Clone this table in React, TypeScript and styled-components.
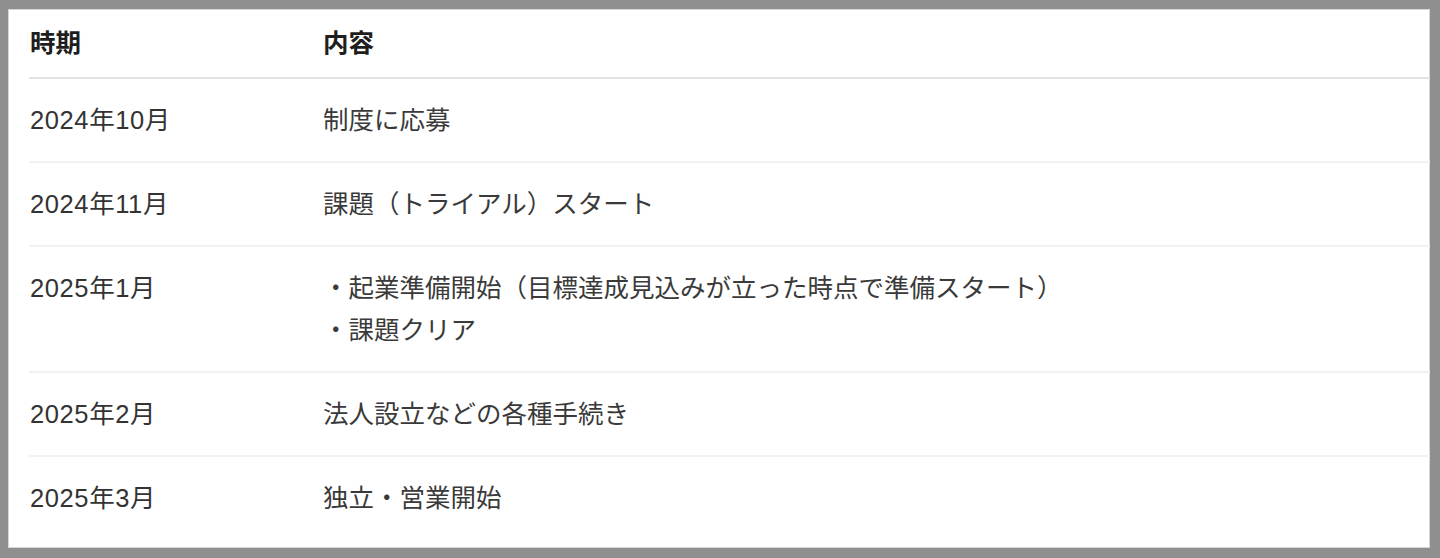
import styled, { createGlobalStyle } from 'styled-components';

const rows: { period: string; items: string[] }[] = [
    { period: '2024年10月', items: ['制度に応募'] },
    { period: '2024年11月', items: ['課題（トライアル）スタート'] },
    { period: '2025年1月', items: ['・起業準備開始（目標達成見込みが立った時点で準備スタート）', '・課題クリア'] },
    { period: '2025年2月', items: ['法人設立などの各種手続き'] },
    { period: '2025年3月', items: ['独立・営業開始'] },
];

export default function App () {
    return (
        <>
            <GlobalStyle />
            <Frame>
                <Panel>
                    <Table>
                        <thead>
                            <tr>
                                <Th>時期</Th>
                                <Th>内容</Th>
                            </tr>
                        </thead>
                        <tbody>
                            {rows.map((row, i) => (
                                <Tr key={`row-${i}`} last={i === rows.length - 1}>
                                    <PeriodCell>{row.period}</PeriodCell>
                                    <Td>
                                        {row.items.map((x, j) => <Line key={`line-${j}`}>{x}</Line>)}
                                    </Td>
                                </Tr>
                            ))}
                        </tbody>
                    </Table>
                </Panel>
            </Frame>
        </>
    );
}

const GlobalStyle = createGlobalStyle`
html, body {
    margin: 0;
    padding: 0;
    background: #8f8f8f;
}
body {
    font-family: 'Liberation Sans', 'Noto Sans CJK JP', sans-serif;
}
`;

const Frame = styled.div`
box-sizing: border-box;
height: 558px;
padding: 9px 10px 10px 8px;
background: #8f8f8f;
`;

const Panel = styled.div`
box-sizing: border-box;
height: 100%;
padding: 0 0 0 21px;
background: #fff;
box-shadow: inset 0 0 0 1px #d6d6d6;
overflow: hidden;
`;

const Table = styled.table`
width: 100%;
border-collapse: collapse;
font-size: 25.5px;
`;

const Th = styled.th`
padding: 13px 0 13px 1px;
line-height: 42px;
text-align: left;
font-weight: 700;
color: #1e1e1e;
border-bottom: 2px solid #e2e2e2;
&:first-child {
    width: 292px;
}
`;

const Tr = styled.tr<{ last: boolean }>`
border-bottom: ${p => p.last ? 'none' : '2px solid #f1f1f1'};
`;

const Td = styled.td`
padding: 20px 0 20px 1px;
line-height: 42px;
vertical-align: top;
color: #3a3a3a;
`;

const PeriodCell = styled(Td)`
color: #333;
letter-spacing: 0.6px;
`;

const Line = styled.div`
white-space: nowrap;
`;
